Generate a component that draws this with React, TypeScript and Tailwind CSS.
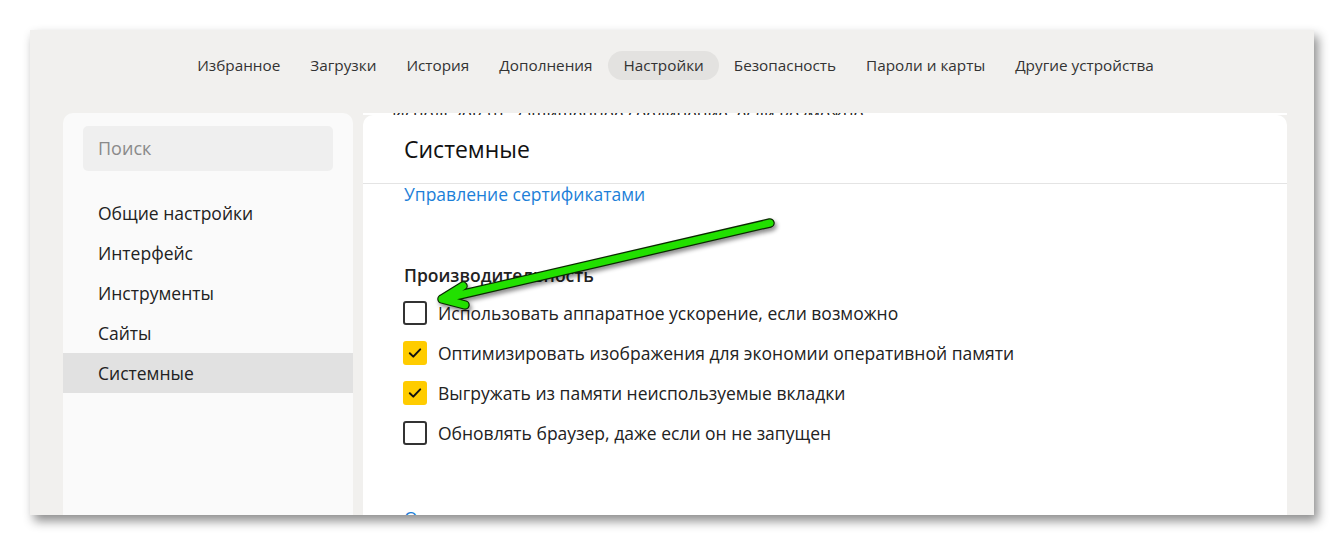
import React from "react";

const navItems = [
  "Избранное",
  "Загрузки",
  "История",
  "Дополнения",
  "Настройки",
  "Безопасность",
  "Пароли и карты",
  "Другие устройства",
];

const menu = ["Общие настройки", "Интерфейс", "Инструменты", "Сайты", "Системные"];

const options: { label: string; checked: boolean }[] = [
  { label: "Использовать аппаратное ускорение, если возможно", checked: false },
  { label: "Оптимизировать изображения для экономии оперативной памяти", checked: true },
  { label: "Выгружать из памяти неиспользуемые вкладки", checked: true },
  { label: "Обновлять браузер, даже если он не запущен", checked: false },
];

function Box({ checked }: { checked: boolean }) {
  if (checked) {
    return (
      <div className="w-[24px] h-[24px] rounded-[3px] bg-[#ffcc00] flex items-center justify-center shrink-0">
        <svg width="14" height="12" viewBox="0 0 14 12" fill="none">
          <path d="M1.8 6.2 L5.3 9.6 L12.2 2.4" stroke="#111" strokeWidth="2" strokeLinecap="round" strokeLinejoin="round" />
        </svg>
      </div>
    );
  }
  return <div className="w-[24px] h-[24px] rounded-[3px] border-2 border-[#333] bg-white shrink-0" />;
}

export default function App() {
  return (
    <div className="w-[1344px] h-[545px] bg-white pt-[30px] pl-[30px] overflow-hidden" style={{ fontFamily: '"Open Sans", "Noto Sans", sans-serif' }}>
      <div className="relative w-[1284px] h-[485px] bg-[#f1f0ee] overflow-hidden shadow-[4px_6px_10px_rgba(0,0,0,0.45)] flex flex-col">
        {/* Nav */}
        <div className="h-[83px] pt-[21px] flex justify-center shrink-0">
          <div className="flex items-start h-[29px] ml-[7px]">
            {navItems.map((n) => (
              <div
                key={n}
                className={
                  "h-[29px] px-[15px] flex items-center text-[15.3px] text-[#333] rounded-full " +
                  (n === "Настройки" ? "bg-[#e3e2e0] pl-[16px]" : "")
                }
              >
                {n}
              </div>
            ))}
          </div>
        </div>

        {/* Body */}
        <div className="flex flex-1 pl-[33px] gap-[10px] min-h-0 overflow-hidden">
          {/* Sidebar */}
          <div className="w-[290px] bg-[#fafafa] rounded-t-[10px] pt-[13px] shrink-0">
            <div className="mx-[20px] h-[45px] bg-[#efefef] rounded-[5px] flex items-center pl-[15px] text-[18px] text-[#8a8a8a]">
              Поиск
            </div>
            <div className="mt-[22px] flex flex-col">
              {menu.map((m) => (
                <div
                  key={m}
                  className={
                    "h-[40px] flex items-center pl-[35px] text-[17.5px] text-[#222] " +
                    (m === "Системные" ? "bg-[#e1e1e1]" : "")
                  }
                >
                  {m}
                </div>
              ))}
            </div>
          </div>

          {/* Main */}
          <div className="w-[924px] flex flex-col shrink-0 overflow-hidden">
            <div className="h-[2px] shrink-0 overflow-hidden bg-white pl-[29px] text-[17px] leading-[2px] text-[#222] whitespace-nowrap">
              Использовать защищенное соединение, если возможно
            </div>
            <div className="flex-1 shrink-0 bg-white rounded-t-[10px] flex flex-col">
              <div className="h-[69px] shrink-0 border-b border-[#e4e4e4] flex items-center pl-[41px] text-[23px] text-[#111]">
                Системные
              </div>
              <div className="pl-[41px]">
                <div className="leading-[20px] text-[17.5px] text-[#1d7fd8]">Управление сертификатами</div>
                <div className="mt-[61px] leading-[20px] text-[17.5px] font-semibold text-[#222]">
                  Производительность
                </div>
                <div className="mt-[8px] flex flex-col">
                  {options.map((o) => (
                    <div key={o.label} className="h-[40px] flex items-center gap-[11px] -ml-[1px]">
                      <Box checked={o.checked} />
                      <span className="text-[17.5px] text-[#222]">{o.label}</span>
                    </div>
                  ))}
                </div>
                <div className="mt-[55px] leading-[20px] text-[17.5px] text-[#1d7fd8]">Очистить историю</div>
              </div>
            </div>
          </div>
        </div>

        {/* Green arrow overlay */}
        <svg
          className="absolute left-0 top-0 pointer-events-none"
          width="1284"
          height="485"
          viewBox="30 30 1284 485"
          style={{ filter: "drop-shadow(2px 3px 2px rgba(0,0,0,0.45))" }}
        >
          <g strokeLinecap="round" strokeLinejoin="round" fill="none">
            <path d="M770 223 L442 299 M442 299 L463 286 M442 299 L465 305" stroke="#0a2a00" strokeWidth="9.5" />
            <path d="M770 223 L442 299 M442 299 L463 286 M442 299 L465 305" stroke="#22e000" strokeWidth="7" />
          </g>
        </svg>
      </div>
    </div>
  );
}
